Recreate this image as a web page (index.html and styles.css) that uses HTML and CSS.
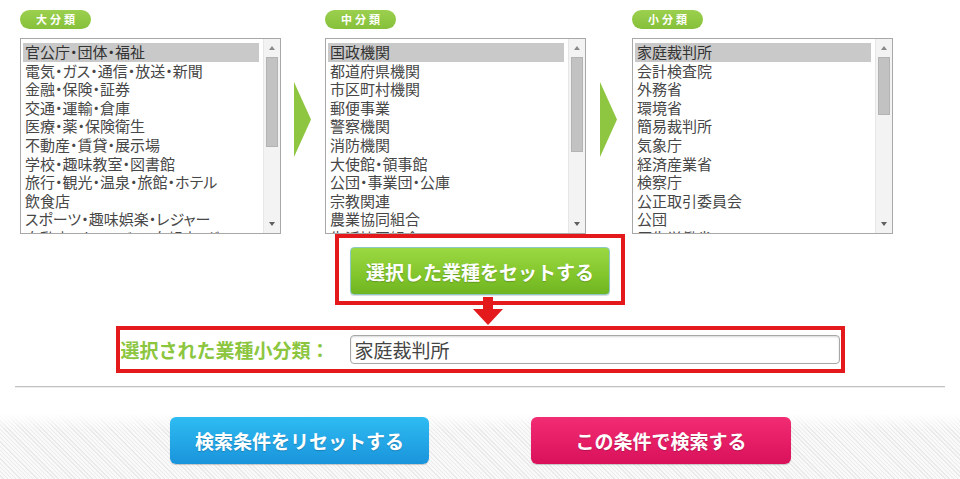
FILE: index.html
```html
<!DOCTYPE html>
<html lang="ja">
<head>
<meta charset="utf-8">
<title>業種選択</title>
<link rel="stylesheet" href="styles.css">
</head>
<body>
<div class="page">
  <div class="pickers">
    <div class="col">
      <div class="pill">大分類</div>
      <div class="listbox">
        <div class="options">
          <div class="option sel">官公庁・団体・福祉</div>
          <div class="option">電気・ガス・通信・放送・新聞</div>
          <div class="option">金融・保険・証券</div>
          <div class="option">交通・運輸・倉庫</div>
          <div class="option">医療・薬・保険衛生</div>
          <div class="option">不動産・賃貸・展示場</div>
          <div class="option">学校・趣味教室・図書館</div>
          <div class="option">旅行・観光・温泉・旅館・ホテル</div>
          <div class="option">飲食店</div>
          <div class="option">スポーツ・趣味娯楽・レジャー</div>
          <div class="option">自動車・オートバイ・自転車・ガソリン</div>
        </div>
        <div class="scrollbar">
          <div class="sb-btn"><span class="tri-up"></span></div>
          <div class="sb-track"><div class="sb-thumb" style="height:90px"></div></div>
          <div class="sb-btn"><span class="tri-down"></span></div>
        </div>
      </div>
    </div>
    <div class="arrow">
      <svg width="17" height="75" viewBox="0 0 17 75"><polygon points="0,0 17,37.5 0,75" fill="#8fc641"/></svg>
    </div>
    <div class="col col-mid">
      <div class="pill">中分類</div>
      <div class="listbox">
        <div class="options">
          <div class="option sel">国政機関</div>
          <div class="option">都道府県機関</div>
          <div class="option">市区町村機関</div>
          <div class="option">郵便事業</div>
          <div class="option">警察機関</div>
          <div class="option">消防機関</div>
          <div class="option">大使館・領事館</div>
          <div class="option">公団・事業団・公庫</div>
          <div class="option">宗教関連</div>
          <div class="option">農業協同組合</div>
          <div class="option">生活協同組合</div>
        </div>
        <div class="scrollbar">
          <div class="sb-btn"><span class="tri-up"></span></div>
          <div class="sb-track"><div class="sb-thumb" style="height:95px"></div></div>
          <div class="sb-btn"><span class="tri-down"></span></div>
        </div>
      </div>
    </div>
    <div class="arrow arrow-2">
      <svg width="17" height="75" viewBox="0 0 17 75"><polygon points="0,0 17,37.5 0,75" fill="#8fc641"/></svg>
    </div>
    <div class="col col-right">
      <div class="pill">小分類</div>
      <div class="listbox">
        <div class="options">
          <div class="option sel">家庭裁判所</div>
          <div class="option">会計検査院</div>
          <div class="option">外務省</div>
          <div class="option">環境省</div>
          <div class="option">簡易裁判所</div>
          <div class="option">気象庁</div>
          <div class="option">経済産業省</div>
          <div class="option">検察庁</div>
          <div class="option">公正取引委員会</div>
          <div class="option">公団</div>
          <div class="option">厚生労働省</div>
        </div>
        <div class="scrollbar">
          <div class="sb-btn"><span class="tri-up"></span></div>
          <div class="sb-track"><div class="sb-thumb" style="height:58px"></div></div>
          <div class="sb-btn"><span class="tri-down"></span></div>
        </div>
      </div>
    </div>
  </div>

  <div class="set-row">
    <div class="red-frame set-frame">
      <button class="btn btn-green">選択した業種をセットする</button>
    </div>
    <svg class="down-arrow" width="30" height="29" viewBox="0 0 30 29">
      <rect x="10" y="0" width="10" height="13" fill="#e3191c"/>
      <polygon points="0,12 30,12 15,28" fill="#e3191c"/>
    </svg>
  </div>

  <div class="result-row">
    <div class="red-frame result-frame">
      <span class="result-label">選択された業種小分類：</span>
      <div class="result-input">家庭裁判所</div>
    </div>
  </div>

  <div class="divider"></div>

  <div class="footer">
    <button class="btn btn-blue">検索条件をリセットする</button>
    <button class="btn btn-pink">この条件で検索する</button>
  </div>
</div>
</body>
</html>
```

FILE: styles.css
```css
* { box-sizing: border-box; }
html, body { margin: 0; padding: 0; background: #fff; }
body {
  font-family: "Noto Sans CJK JP", "Noto Sans", sans-serif;
  width: 960px;
  height: 479px;
  overflow: hidden;
}
.page { width: 960px; }

.pickers {
  display: flex;
  align-items: flex-start;
  padding: 10px 0 0 20px;
}
.col { display: flex; flex-direction: column; width: 261px; }
.col-mid { margin-left: 14px; }
.col-right { margin-left: 15px; width: 261px; }
.arrow { margin: 72px 0 0 13px; width: 17px; height: 75px; line-height: 0; }
.arrow-2 { margin-left: 14px; }

.pill {
  width: 71px;
  height: 19px;
  border-radius: 10px;
  background: linear-gradient(#9bd04e, #86c03a);
  color: #fff;
  font-size: 11px;
  font-weight: 700;
  letter-spacing: 3px;
  line-height: 19px;
  text-align: center;
  padding-left: 3px;
}

.listbox {
  margin-top: 9px;
  width: 261px;
  height: 196px;
  border: 1px solid #a8a8a8;
  background: #fff;
  display: flex;
  overflow: hidden;
}
.options {
  flex: 1;
  min-width: 0;
  padding: 4px 4px 0 2px;
  overflow: hidden;
  font-size: 15px;
  color: #474747;
  font-feature-settings: "palt" 1;
}
.option {
  height: 18.6px;
  line-height: 18.6px;
  padding-left: 2px;
  white-space: nowrap;
}
.option.sel { background: #c9c9c9; color: #333; }

.scrollbar {
  width: 17px;
  display: flex;
  flex-direction: column;
  background: #f3f3f3;
  border-left: 1px solid #e6e6e6;
}
.sb-btn {
  height: 18px;
  display: flex;
  align-items: center;
  justify-content: center;
}
.tri-up, .tri-down {
  width: 0; height: 0;
  border-left: 3.5px solid transparent;
  border-right: 3.5px solid transparent;
}
.tri-up { border-bottom: 4px solid #8a8a8a; }
.tri-down { border-top: 4px solid #606060; }
.sb-track { flex: 1; padding: 0 2px; }
.sb-thumb {
  background: #c2c2c2;
  border: 1px solid #b3b3b3;
}

.red-frame { border: 4px solid #e3191c; }

.set-row {
  position: relative;
  display: flex;
  justify-content: center;
}
.set-frame { padding: 9px 11px 6px; }
.down-arrow { position: absolute; left: 473px; top: 63px; }

.btn {
  border: 0;
  font-family: "Noto Sans CJK JP", "Noto Sans", sans-serif;
  font-weight: 700;
  font-size: 19px;
  color: #fff;
  text-shadow: 0 1px 1px rgba(0,0,0,0.2);
  padding: 0;
  display: flex;
  align-items: center;
  justify-content: center;
}
.btn-green {
  width: 260px;
  height: 48px;
  border-radius: 4px;
  background: linear-gradient(#9bd842, #84c72d 55%, #6fb521);
  border: 1px solid #8cc8c8;
  box-shadow: 0 1px 1px rgba(0,0,0,0.15);
}

.result-row {
  display: flex;
  justify-content: center;
  margin-top: 21px;
}
.result-frame {
  width: 729px;
  height: 47px;
  display: flex;
  align-items: center;
  justify-content: space-between;
  padding: 0 1px;
}
.result-label {
  color: #8cc63f;
  font-size: 19px;
  font-weight: 700;
  white-space: nowrap;
}
.result-input {
  width: 490px;
  height: 29px;
  border: 1px solid #a7a7a7;
  border-radius: 4px;
  box-shadow: inset 0 1px 2px rgba(0,0,0,0.15);
  font-size: 19px;
  color: #444;
  line-height: 27px;
  padding-left: 4px;
  background: #fff;
}

.divider {
  margin: 13px 15px 0;
  height: 2px;
  border-top: 1px solid #c2c2c2;
  border-bottom: 1px solid #ececec;
}

.footer {
  height: 91px;
  display: flex;
  justify-content: center;
  align-items: flex-start;
  gap: 102px;
  padding-top: 29px;
  padding-left: 1px;
  background:
    linear-gradient(#fff 0, #fff 26px, rgba(255,255,255,0) 42px),
    repeating-linear-gradient(45deg, #f9f9f9 0, #f9f9f9 2px, #eaeaea 2px, #eaeaea 3px);
}
.btn-blue {
  width: 259px;
  height: 47px;
  border-radius: 6px;
  background: linear-gradient(#2ebcf2, #1a94dc);
  box-shadow: 0 1px 1px rgba(0,0,0,0.2);
}
.btn-pink {
  width: 260px;
  height: 47px;
  border-radius: 6px;
  background: linear-gradient(#f22c72, #d9115b);
  box-shadow: 0 1px 1px rgba(0,0,0,0.2);
}
```
